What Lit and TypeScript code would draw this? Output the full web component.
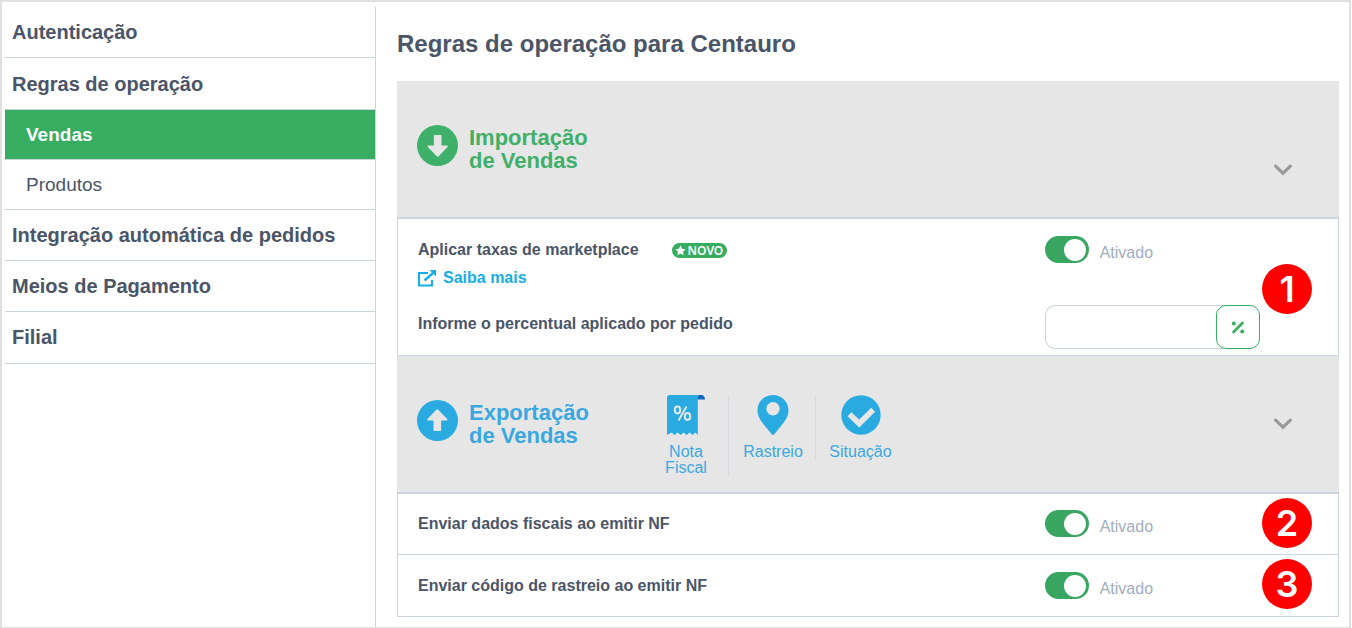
import { LitElement, html, css, svg } from "lit";
import { customElement, property } from "lit/decorators.js";

const arrowCircle = (up: boolean) => html`
  <svg class="round" viewBox="0 0 41 41" aria-hidden="true">
    <circle cx="20.5" cy="20.5" r="20.5" fill="currentColor" />
    <path
      fill="#e6e6e6"
      transform=${up ? "rotate(180 20.5 20.5)" : "rotate(0)"}
      d="M17.600 10h6.200q.7 0 .7.7v9.900h5.600q1.400.2.5 1.300l-9.200 9.600q-.7.6-1.400 0l-9.200-9.600q-.9-1.100.5-1.300h5.600v-9.900q0-.7.7-.7z"
    />
  </svg>
`;

const chevron = html`
  <svg width="20" height="12" viewBox="0 0 20 12" aria-hidden="true">
    <path d="M2.600 2.200 10 9.200l7.400-7" fill="none" stroke="#999" stroke-width="3.200" stroke-linecap="round" stroke-linejoin="miter" />
  </svg>
`;

const invoiceIcon = svg`
  <path d="M31 0h5q3 1 3 4.500h-8z" fill="#0f66bd" />
  <path d="M3 0h30q-1.200 1-1.200 4v36l-2.600-2.500-2.600 2.500-3-2.500-3 2.500-3-2.500-3 2.500-3-2.500-3 2.500-3-2.500L1 40V2.500Q1 0 3 0z" fill="#29abe2" />
  <g fill="none" stroke="#e6e6e6">
    <ellipse cx="11.500" cy="15" rx="2.700" ry="3.400" stroke-width="2" />
    <ellipse cx="21.500" cy="21.500" rx="2.700" ry="3.400" stroke-width="2" />
    <path d="M20.500 11.500l-8 14" stroke-width="1.800" />
  </g>`;

const pinIcon = svg`
  <path fill="#29abe2" fill-rule="evenodd" d="M20 0C11.300 0 4.500 6.700 4.500 15.300c0 6.500 3.500 10.700 7.500 15.700 2.500 3.200 4.800 6 6.700 8.300q1.300 1.400 2.600 0c1.900-2.300 4.200-5.100 6.700-8.300 4-5 7.500-9.200 7.500-15.700C35.500 6.700 28.700 0 20 0zm0 7.100a6.700 6.700 0 1 1 0 13.400 6.700 6.700 0 0 1 0-13.400z" />`;

const checkIcon = svg`
  <circle cx="20" cy="20" r="19.700" fill="#29abe2" />
  <path d="M8.500 19.200l9.700 9.300 14-13.700" fill="none" stroke="#e6e6e6" stroke-width="5.600" stroke-linejoin="miter" />`;

@customElement("side-menu")
export class SideMenu extends LitElement {
  static styles = css`
    :host { display: block; }
    ul { list-style: none; margin: 0; padding: 0; }
    .group { padding-top: 1px; }
    a {
      display: flex;
      align-items: center;
      box-sizing: border-box;
      height: 51px;
      padding: 0 7px;
      border-bottom: 1px solid #cbd5e0;
      color: #4a5568;
      font-size: 20px;
      font-weight: 700;
      text-decoration: none;
    }
    .sub a { height: 50px; padding-left: 21px; font-size: 19px; font-weight: 400; }
    .sub a.active { background: #36ad60; color: #fff; font-weight: 700; }
    .last { height: 52px; }
  `;

  render() {
    return html`
      <nav aria-label="Configurações">
        <ul>
          <li><a href="#autenticacao">Autenticação</a></li>
          <li class="group">
            <a href="#regras">Regras de operação</a>
            <ul class="sub">
              <li><a class="active" href="#vendas" aria-current="page">Vendas</a></li>
              <li><a href="#produtos">Produtos</a></li>
            </ul>
          </li>
          <li><a href="#integracao">Integração automática de pedidos</a></li>
          <li><a href="#pagamento">Meios de Pagamento</a></li>
          <li><a class="last" href="#filial">Filial</a></li>
        </ul>
      </nav>
    `;
  }
}

@customElement("toggle-switch")
export class ToggleSwitch extends LitElement {
  @property() label = "";

  static styles = css`
    :host { display: block; }
    label { display: flex; align-items: center; gap: 11px; color: #a0aec0; font-size: 16px; }
    input {
      appearance: none;
      display: flex;
      align-items: center;
      box-sizing: border-box;
      width: 44px;
      height: 27px;
      margin: 0;
      padding: 0 3px;
      border-radius: 14px;
      background: #b8c2cc;
    }
    input::before { content: ""; width: 22px; height: 22px; border-radius: 50%; background: #fff; }
    input:checked { background: #38a561; justify-content: flex-end; }
    span { padding-top: 7px; line-height: 20px; }
  `;

  render() {
    return html`
      <label>
        <input type="checkbox" role="switch" aria-label=${this.label} checked />
        <span>Ativado</span>
      </label>
    `;
  }
}

@customElement("app-root")
export class AppRoot extends LitElement {
  static styles = css`
    :host {
      display: block;
      padding-right: 1px;
      font-family: "Liberation Sans", Arial, sans-serif;
      color: #4a5568;
    }
    .page {
      display: grid;
      grid-template-columns: 371px 1fr;
      box-sizing: border-box;
      min-height: 100vh;
      padding: 5px 10px 0 3px;
      border: 2px solid #e0e0e0;
      border-bottom-width: 1px;
    }
    side-menu { border-right: 1px solid #cbd5e0; }
    main { padding: 0 0 10px 21px; }
    h1 { margin: 0; padding: 22px 0; font-size: 24px; line-height: 30px; }
    .head {
      display: flex;
      align-items: center;
      box-sizing: border-box;
      height: 138px;
      padding: 0 46px 0 20px;
      border-bottom: 2px solid #cbd5e0;
      background: #e6e6e6;
    }
    .title {
      display: flex;
      align-items: center;
      gap: 11px;
      width: 225px;
      margin: 0;
      padding-bottom: 7px;
      color: #3fb06a;
      font-size: 22px;
      line-height: 23px;
    }
    .title.out { color: #29abe2; }
    .title.out span { color: #3aa8e0; }
    .title span { padding-top: 6px; }
    .round { width: 41px; height: 41px; flex: none; }
    .toggle { margin-left: auto; padding: 0; border: 0; background: none; line-height: 0; }
    .toggle.low { padding-top: 42px; }
    .features { display: flex; align-items: flex-start; margin: 0; padding: 22px 0 0; list-style: none; }
    .features li {
      box-sizing: border-box;
      width: 87px;
      padding-left: 2px;
      border-right: 1px solid #d9dcdf;
      color: #3aa8e0;
      font-size: 16px;
      line-height: 16px;
      text-align: center;
    }
    .features li:last-child { border-right: 0; }
    .features svg { display: block; width: 40px; height: 40px; margin: 0 auto 9px; }
    .features span { display: block; margin: 0 auto; }
    .features .narrow { width: 50px; }
    .body { border: 1px solid #cbd5e0; border-top: 0; }
    .row {
      display: grid;
      grid-template-columns: 2fr 1fr;
      align-items: center;
      position: relative;
      box-sizing: border-box;
      height: 61px;
    }
    .row > * { padding-left: 20px; }
    .row.line:not(:last-child) { padding-bottom: 1px; border-bottom: 1px solid #cbd5e0; }
    .row.tall { height: 74px; align-items: start; }
    .tall .name { padding-top: 21px; }
    .tall toggle-switch { padding-top: 17px; }
    .row.field { height: 62px; }
    .name { font-size: 16px; font-weight: 700; line-height: 20px; }
    .top { display: flex; align-items: center; gap: 33px; }
    .novo {
      display: flex;
      align-items: center;
      gap: 2px;
      padding: 0 4px 0 3px;
      border-radius: 8px;
      background: #36ad60;
      color: #fff;
      font: 600 12px/15px "Noto Sans", sans-serif;
    }
    .more {
      display: inline-flex;
      align-items: center;
      gap: 7px;
      margin-top: 8px;
      color: #16aee8;
      text-decoration: none;
    }
    .fee { display: flex; width: 215px; margin-top: 6px; }
    .fee input {
      box-sizing: border-box;
      width: 181px;
      height: 44px;
      margin-right: -10px;
      padding: 0 12px;
      border: 1px solid #cbd5e0;
      border-right: 0;
      border-radius: 10px 0 0 10px;
      font: 16px "Liberation Sans", Arial, sans-serif;
    }
    .fee button {
      display: grid;
      place-items: center;
      box-sizing: border-box;
      width: 44px;
      height: 44px;
      padding: 0;
      border: 1px solid #36ad60;
      border-radius: 10px;
      background: #fff;
      color: #36ad60;
    }
    .step {
      position: absolute;
      right: 26px;
      top: 4px;
      width: 50px;
      height: 50px;
      padding: 0;
      border-radius: 50%;
      background: #f00;
      color: #fff;
      font: 600 36px/50px Inter, sans-serif;
      text-align: center;
    }
    .tall .step { top: 45px; z-index: 1; }
  `;

  private heading(up: boolean, first: string) {
    return html`
      <h2 class=${up ? "title out" : "title"}>
        ${arrowCircle(up)}<span>${first}<br />de Vendas</span>
      </h2>
    `;
  }

  private rule(name: string, step: number) {
    return html`
      <div class="row line">
        <div class="name">${name}</div>
        <toggle-switch label=${name}></toggle-switch>
        <span class="step">${step}</span>
      </div>
    `;
  }

  render() {
    return html`
      <div class="page">
        <side-menu></side-menu>
        <main>
          <h1>Regras de operação para Centauro</h1>
          <section>
            <div class="head">
              ${this.heading(false, "Importação")}
              <button class="toggle low" aria-label="Importação de Vendas">${chevron}</button>
            </div>
            <div class="body">
              <div class="row tall">
                <div class="name">
                  <div class="top">
                    Aplicar taxas de marketplace
                    <span class="novo">
                      <svg width="11" height="11" viewBox="0 0 24 24" aria-hidden="true">
                        <path fill="#fff" d="M12 .8l3.400 7.200 7.800 1-5.700 5.500 1.400 7.900L12 18.600l-6.900 3.800 1.400-7.900L.8 9l7.800-1z" />
                      </svg>
                      NOVO
                    </span>
                  </div>
                  <a class="more" href="#saiba-mais">
                    <svg width="18" height="17" viewBox="0 0 18 17" aria-hidden="true">
                      <path d="M10 3H1v12.500h13V10" fill="none" stroke="currentColor" stroke-width="2" />
                      <path d="M6.500 10.500L15 3" fill="none" stroke="currentColor" stroke-width="2.400" />
                      <path d="M11.500 0H18v6.500z" fill="currentColor" />
                    </svg>
                    Saiba mais
                  </a>
                </div>
                <toggle-switch label="Aplicar taxas de marketplace"></toggle-switch>
                <span class="step">1</span>
              </div>
              <div class="row field">
                <label class="name" for="fee">Informe o percentual aplicado por pedido</label>
                <div class="fee">
                  <input id="fee" type="text" inputmode="decimal" />
                  <button type="button" aria-label="Percentual">
                    <svg width="14" height="13" viewBox="0 0 14 13" aria-hidden="true">
                      <path d="M2.500 11L11.500 2" stroke="currentColor" stroke-width="2.600" stroke-linecap="round" />
                      <circle cx="2.800" cy="2.600" r="2" fill="currentColor" />
                      <circle cx="11.200" cy="10.600" r="2" fill="currentColor" />
                    </svg>
                  </button>
                </div>
              </div>
            </div>
          </section>
          <section>
            <div class="head">
              ${this.heading(true, "Exportação")}
              <ul class="features">
                <li><svg viewBox="0 0 40 40" aria-hidden="true">${invoiceIcon}</svg><span class="narrow">Nota Fiscal</span></li>
                <li><svg viewBox="0 0 40 40" aria-hidden="true">${pinIcon}</svg><span>Rastreio</span></li>
                <li><svg viewBox="0 0 40 40" aria-hidden="true">${checkIcon}</svg><span>Situação</span></li>
              </ul>
              <button class="toggle" aria-label="Exportação de Vendas">${chevron}</button>
            </div>
            <div class="body">
              ${this.rule("Enviar dados fiscais ao emitir NF", 2)}
              ${this.rule("Enviar código de rastreio ao emitir NF", 3)}
            </div>
          </section>
        </main>
      </div>
    `;
  }
}
